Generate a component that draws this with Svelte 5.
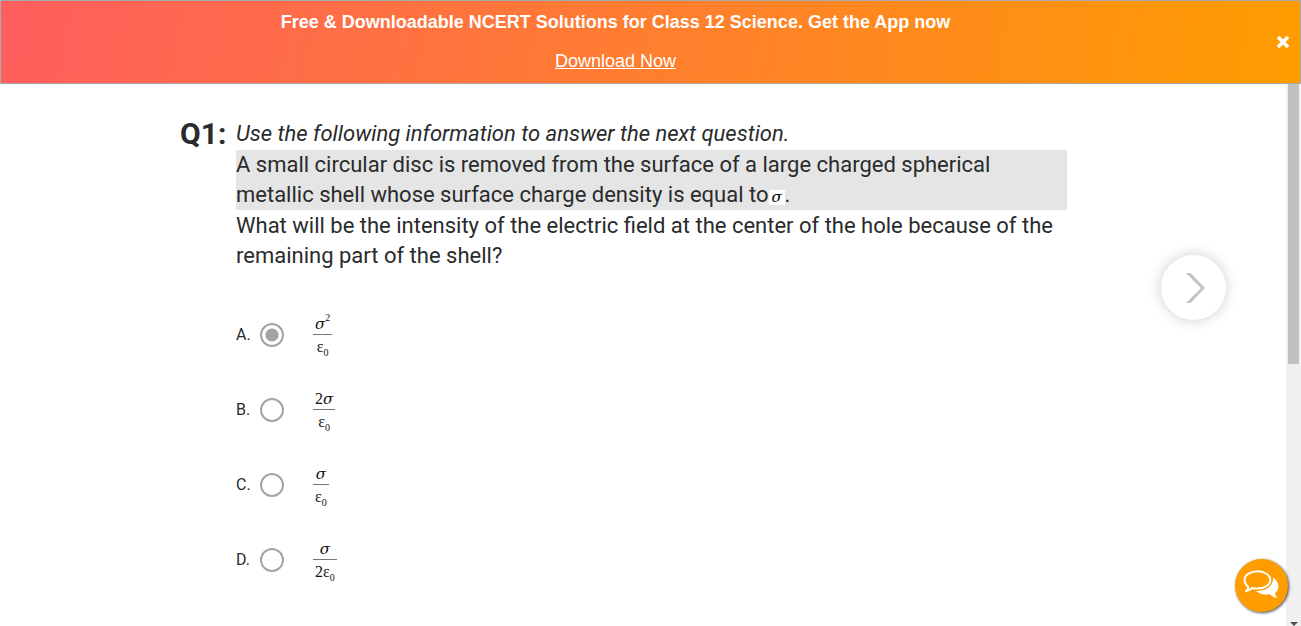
<script>
  const options = [
    { id: 'A', coefficient: '', power: '2', divisor: '' },
    { id: 'B', coefficient: '2', power: '', divisor: '' },
    { id: 'C', coefficient: '', power: '', divisor: '' },
    { id: 'D', coefficient: '', power: '', divisor: '2' }
  ];
  let selected = $state('A');
  let bannerOpen = $state(true);
</script>

<div class="page">
  {#if bannerOpen}
    <header class="banner">
      <div class="message">
        <strong>Free &amp; Downloadable NCERT Solutions for Class 12 Science. Get the App now</strong>
        <a href="#download">Download Now</a>
      </div>
      <button class="close" aria-label="Close" onclick={() => (bannerOpen = false)}>
        <svg width="14" height="14" viewBox="0 0 14 14" aria-hidden="true">
          <path d="M2 2l10 10M12 2l-10 10" stroke="#fff" stroke-width="3.6" fill="none" />
        </svg>
      </button>
    </header>
  {/if}

  <div class="body">
    <main>
      <section class="question">
        <h1>Q1:</h1>
        <div class="content">
          <div class="text">
            <p class="intro"><em>Use the following information to answer the next question.</em></p>
            <p class="given">A small circular disc is removed from the surface of a large charged spherical metallic shell whose surface charge density is equal to<span class="sigma">σ</span>.</p>
            <p class="ask">What will be the intensity of the electric field at the center of the hole because of the remaining part of the shell?</p>
          </div>
          <div class="options">
            {#each options as o}
              <label class="option">
                <span class="letter">{o.id}.</span>
                <input type="radio" name="answer" value={o.id} bind:group={selected} />
                <span class="fraction">
                  <span class="num">{o.coefficient}<i>σ</i>{#if o.power}<sup>{o.power}</sup>{/if}</span>
                  <span class="den">{o.divisor}ε<sub>0</sub></span>
                </span>
              </label>
            {/each}
          </div>
        </div>
      </section>
      <button class="next" aria-label="Next question">
        <svg width="20" height="32" viewBox="0 0 20 32" aria-hidden="true">
          <path d="M0 1h4.500L19 16 4.500 31H0L15 16z" fill="#c3c3c3" />
        </svg>
      </button>
      <button class="chat" aria-label="Chat">
        <svg width="36" height="30" viewBox="0 0 36 30" aria-hidden="true">
          <path d="M14.500 1.200C7.500 1.200 1.500 5 1.500 10c0 2.800 1.500 5.200 3.900 6.700-.1 1.700-.9 3-2.400 4.400 2.700-.4 4.600-1.600 6.100-3.100 1.500.4 3.400.6 5.400.6 7 0 12.800-3.600 12.800-8.600S21.500 1.200 14.500 1.200z" fill="none" stroke="#fff" stroke-width="2" stroke-linejoin="round" />
          <path d="M30 7.500c3.500 2.200 5.400 5.400 5.400 8.900 0 2.600-1.200 4.900-3.400 6.500.2 2 .9 3.600 2.600 5.100-3.500-.5-5.900-1.800-7.700-3.700-5 .9-10.500-.2-14-3.300C22 21.500 31 16.500 30 7.500z" fill="#fff" />
        </svg>
      </button>
    </main>
    <div class="track" aria-hidden="true">
      <div class="thumb"></div>
      <div class="arrow"></div>
    </div>
  </div>
</div>

<style>
  :global(body) {
    margin: 0;
    background: #fff;
  }
  .page {
    display: flex;
    flex-direction: column;
    min-height: 100vh;
    font-family: Roboto, sans-serif;
    color: #292b2c;
  }
  button {
    display: flex;
    align-items: center;
    justify-content: center;
    padding: 0;
    border: 0;
    cursor: pointer;
  }
  .banner {
    display: flex;
    align-items: center;
    border: 1px solid #aaa;
    background: linear-gradient(100deg, #ff5e5e, #ff9d00);
    font-family: "Liberation Sans", Arial, sans-serif;
    font-size: 18px;
    line-height: 21px;
    color: #fff;
  }
  .message {
    flex: 1;
    display: flex;
    flex-direction: column;
    align-items: center;
    gap: 18px;
    padding: 11px 0;
  }
  .banner a {
    color: #fff;
  }
  .close {
    width: 34px;
    height: 36px;
    margin-left: 36px;
    background: none;
  }
  .body {
    flex: 1;
    display: flex;
  }
  main {
    flex: 1;
    box-sizing: border-box;
    padding: 34px 219px 0 180px;
  }
  .question {
    display: flex;
  }
  h1 {
    flex: 0 0 56px;
    margin: 0;
    font-size: 30px;
    line-height: 32px;
    font-weight: 700;
  }
  .content {
    flex: 1;
  }
  .text {
    font-size: 22px;
    line-height: 30px;
  }
  p {
    margin: 0;
  }
  .intro {
    padding: 1px 0;
  }
  .given {
    background: #e5e5e5;
  }
  .ask {
    padding-top: 1px;
  }
  .sigma {
    display: inline-block;
    width: 16px;
    height: 15px;
    background: #fff;
    font: italic 15px/15px "DejaVu Serif", serif;
    text-align: center;
    color: #000;
  }
  .options {
    padding-top: 26px;
  }
  .option {
    display: flex;
    align-items: center;
    height: 75px;
    font-size: 16px;
  }
  .letter {
    width: 24px;
  }
  input {
    appearance: none;
    box-sizing: border-box;
    width: 24px;
    height: 24px;
    margin: 0 29px 0 0;
    border: 2px solid #a4a4a4;
    border-radius: 50%;
  }
  input:checked {
    background: radial-gradient(circle, #a4a4a4 6px, transparent 7px);
  }
  .fraction {
    display: flex;
    flex-direction: column;
    font: 16px/24px "Liberation Serif", serif;
    text-align: center;
    color: #111;
  }
  .num,
  .den {
    height: 22px;
    padding: 0 2px;
  }
  .num {
    border-bottom: 1px solid #777;
  }
  .num i {
    font-family: "DejaVu Serif", serif;
    font-size: 15px;
    line-height: 0;
  }
  sup,
  sub {
    font-size: 10px;
    line-height: 0;
  }
  sup {
    vertical-align: 8px;
  }
  sub {
    vertical-align: -4px;
  }
  .next {
    position: fixed;
    top: 255px;
    right: 75px;
    width: 65px;
    height: 65px;
    border-radius: 50%;
    background: #fff;
    box-shadow: 0 0 14px rgba(0, 0, 0, 0.2);
  }
  .next svg {
    margin-left: 4px;
  }
  .chat {
    position: fixed;
    right: 13px;
    bottom: 14px;
    width: 53px;
    height: 53px;
    padding: 0 2px 2px 0;
    border-radius: 50%;
    background: #ff9d00;
    box-shadow: 1px 1px 3px rgba(0, 0, 0, 0.7);
  }
  .track {
    display: flex;
    flex-direction: column;
    justify-content: space-between;
    align-items: center;
    width: 15px;
    background: #f0f0f0;
  }
  .thumb {
    width: 11px;
    height: 280px;
    background: #c1c1c1;
  }
  .arrow {
    border: 4px solid transparent;
    border-top-color: #505050;
    border-bottom: 0;
  }
</style>
